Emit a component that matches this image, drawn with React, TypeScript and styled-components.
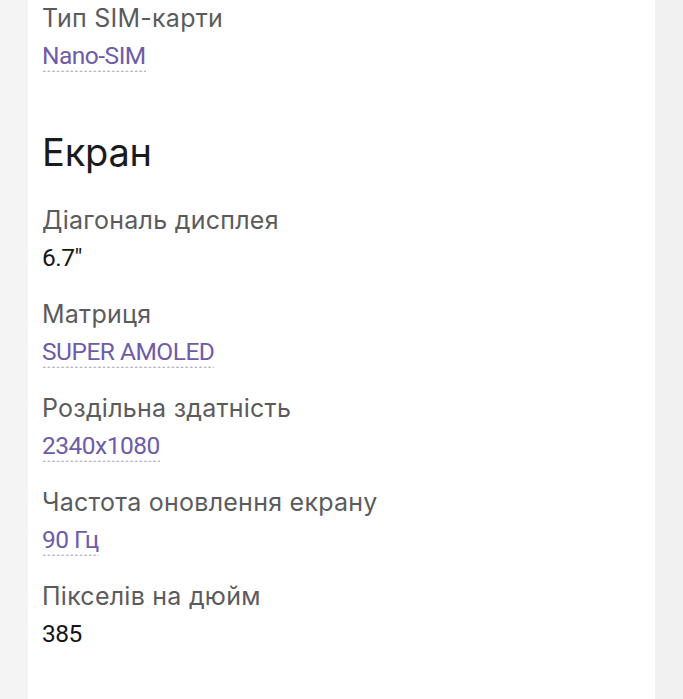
import React from "react";
import styled, { createGlobalStyle } from "styled-components";

const Global = createGlobalStyle`
  html, body { margin: 0; padding: 0; background: #f3f3f4; }
  body { font-family: "Inter", "Noto Sans", sans-serif; }
`;

const Page = styled.div`
  display: flex;
  justify-content: center;
  min-height: 699px;
  background: linear-gradient(90deg, #f4f4f5 0, #f4f4f5 28px, #f1f1f2 28px);
`;

const Card = styled.main`
  width: 627px;
  margin-left: 28px;
  margin-right: 28px;
  background: #ffffff;
  padding: 2px 14px 47px 14px;
  box-sizing: border-box;
  display: flex;
  flex-direction: column;
`;

const Section = styled.section`
  display: flex;
  flex-direction: column;
  gap: 24px;
`;

const Title = styled.h2`
  margin: 56px 0 28px 0;
  font-family: "Inter", sans-serif;
  font-weight: 400;
  font-size: 38px;
  line-height: 48px;
  color: #1b1b1d;
  letter-spacing: -0.2px;
`;

const Item = styled.div`
  display: flex;
  flex-direction: column;
  align-items: flex-start;
  gap: 6px;
`;

const Label = styled.div`
  font-family: "Inter", sans-serif;
  font-size: 25px;
  line-height: 32px;
  color: #5b5b5e;
  letter-spacing: 0.25px;
`;

const Value = styled.span<{ $link?: boolean }>`
  display: inline-block;
  font-family: "Roboto", sans-serif;
  font-size: 24.5px;
  line-height: 32px;
  letter-spacing: -0.5px;
  color: ${(p) => (p.$link ? "#6e5ca8" : "#151517")};
  ${(p) =>
    p.$link
      ? `
    background-image: radial-gradient(circle, #b9b4c6 0.9px, transparent 1.3px);
    background-size: 4.6px 3px;
    background-repeat: repeat-x;
    background-position: 0 30px;
  `
      : ""}
`;

type SpecProps = { label: string; value: string; link?: boolean };

const Spec = ({ label, value, link }: SpecProps) => (
  <Item>
    <Label>{label}</Label>
    <Value $link={link}>{value}</Value>
  </Item>
);

const screen: SpecProps[] = [
  { label: "Діагональ дисплея", value: "6.7\"" },
  { label: "Матриця", value: "SUPER AMOLED", link: true },
  { label: "Роздільна здатність", value: "2340x1080", link: true },
  { label: "Частота оновлення екрану", value: "90 Гц", link: true },
  { label: "Пікселів на дюйм", value: "385" },
];

export default function App() {
  return (
    <>
      <Global />
      <Page>
        <Card>
          <Section>
            <Spec label="Тип SIM-карти" value="Nano-SIM" link />
          </Section>
          <Title>Екран</Title>
          <Section>
            {screen.map((s) => (
              <Spec key={s.label} {...s} />
            ))}
          </Section>
        </Card>
      </Page>
    </>
  );
}
